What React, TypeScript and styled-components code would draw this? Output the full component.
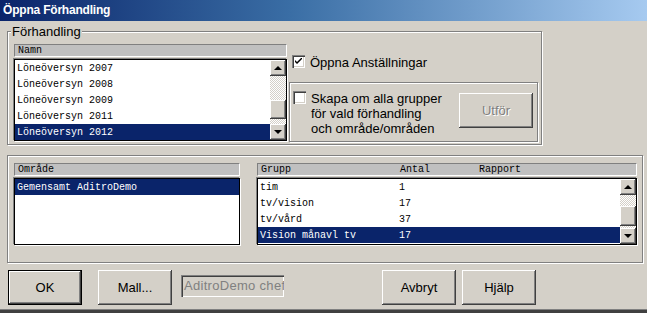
import styled, { createGlobalStyle } from 'styled-components';

const GlobalStyle = createGlobalStyle`
  html, body {
    margin: 0;
    padding: 0;
    background: #d4d0c8;
  }
  body {
    font-family: "Liberation Sans", Arial, sans-serif;
    font-size: 13px;
    color: #000;
  }
  * {
    box-sizing: border-box;
  }
`;

const namn = ['Löneöversyn 2007', 'Löneöversyn 2008', 'Löneöversyn 2009', 'Löneöversyn 2011', 'Löneöversyn 2012'];

const grupper = [
  { name: 'tim', antal: '1' },
  { name: 'tv/vision', antal: '17' },
  { name: 'tv/vård', antal: '37' },
  { name: 'Vision månavl tv', antal: '17' },
];

const CheckMark = () => (
  <svg width="7" height="7" viewBox="0 0 7 7">
    <path d="M0 2 L0 4 L2 6 L7 1 L7 -1 L2 4 Z" fill="#000" />
  </svg>
);

const ScrollBar = ({ before, thumb }: { before: number; thumb: number }) => (
  <Scroll>
    <ArrowButton><ArrowUp /></ArrowButton>
    <Track>
      <Dither style={{ height: before }} />
      <Thumb style={{ height: thumb }} />
      <Dither style={{ flex: 1 }} />
    </Track>
    <ArrowButton><ArrowDown /></ArrowButton>
  </Scroll>
);

const App = () => {
  return (
    <Window>
      <GlobalStyle />
      <TitleBar>Öppna Förhandling</TitleBar>

      <TopGroup>
        <Legend>Förhandling</Legend>
        <TopGrid>
          <ListPanel>
            <Header>Namn</Header>
            <ListBox $height={82}>
              <Rows>
                {namn.map((n, i) => (
                  <Row key={n} $selected={i === namn.length - 1}>{n}</Row>
                ))}
              </Rows>
              <ScrollBar before={24} thumb={19} />
            </ListBox>
          </ListPanel>

          <RightColumn>
            <CheckRow>
              <CheckBox><CheckMark /></CheckBox>
              <CheckLabel>Öppna Anställningar</CheckLabel>
            </CheckRow>
            <InnerBox>
              <CheckRow>
                <CheckBox />
                <CheckLabel>
                  Skapa om alla grupper<br />
                  för vald förhandling<br />
                  och område/områden
                </CheckLabel>
              </CheckRow>
              <Button $disabled $width={74}>Utför</Button>
            </InnerBox>
          </RightColumn>
        </TopGrid>
      </TopGroup>

      <BottomGroup>
        <ListPanel $width={226}>
          <Header>Område</Header>
          <ListBox $height={67}>
            <Rows>
              <Row $selected>Gemensamt AditroDemo</Row>
            </Rows>
          </ListBox>
        </ListPanel>

        <ListPanel $width={380}>
          <Header>
            <Col $width={139}>Grupp</Col>
            <Col $width={79}>Antal</Col>
            <Col>Rapport</Col>
          </Header>
          <ListBox $height={67}>
            <Rows>
              {grupper.map((g, i) => (
                <Row key={g.name} $selected={i === grupper.length - 1}>
                  <Col $width={139}>{g.name}</Col>
                  <Col>{g.antal}</Col>
                </Row>
              ))}
            </Rows>
            <ScrollBar before={11} thumb={20} />
          </ListBox>
        </ListPanel>
      </BottomGroup>

      <ButtonRow>
        <ButtonGroup $gap={16}>
          <Button $default $width={74}>OK</Button>
          <Button $width={74}>Mall...</Button>
        </ButtonGroup>
        <TextBox>AditroDemo chef</TextBox>
        <ButtonGroup $gap={6} $push>
          <Button $width={74}>Avbryt</Button>
          <Button $width={74}>Hjälp</Button>
        </ButtonGroup>
      </ButtonRow>
    </Window>
  );
};

const raised = `
  box-shadow:
    inset -1px -1px 0 #404040,
    inset 1px 1px 0 #fff,
    inset -2px -2px 0 #808080,
    inset 2px 2px 0 #d4d0c8;
`;

const sunken = `
  box-shadow:
    inset 1px 1px 0 #808080,
    inset 2px 2px 0 #404040,
    inset -1px -1px 0 #fff,
    inset -2px -2px 0 #d4d0c8;
`;

const etched = `
  border: 1px solid #808080;
  box-shadow: 1px 1px 0 #fff, inset 1px 1px 0 #fff;
`;

const Window = styled.div`
  width: 647px;
  height: 313px;
  display: flex;
  flex-direction: column;
  background: #d4d0c8;
  box-shadow: inset 0 -3px 0 #404040, inset 0 -4px 0 #808080;
  overflow: hidden;
`;

const TitleBar = styled.div`
  height: 21px;
  padding: 3px 0 0 3px;
  background: linear-gradient(to right, #0a246a 0%, #3a6ea5 45%, #a6caf0 100%);
  color: #fff;
  font-weight: bold;
  font-size: 12px;
  line-height: 15px;
  letter-spacing: -0.2px;
`;

const TopGroup = styled.fieldset`
  ${etched}
  margin: 3px 0 0 7px;
  padding: 5px 3px 2px 6px;
  width: 535px;
  min-width: 0;
`;

const Legend = styled.legend`
  padding: 0 1px;
  margin-left: -3px;
  font-size: 13px;
  line-height: 15px;
  background: #d4d0c8;
`;

const TopGrid = styled.div`
  display: grid;
  grid-template-columns: 273px 249px;
  column-gap: 2px;
`;

const ListPanel = styled.div<{ $width?: number }>`
  display: flex;
  flex-direction: column;
  gap: 2px;
  width: ${(p) => (p.$width ? `${p.$width}px` : 'auto')};
`;

const Header = styled.div`
  height: 13px;
  display: flex;
  align-items: center;
  padding-left: 3px;
  background: #c0c0c0;
  border-top: 1px solid #808080;
  border-left: 1px solid #808080;
  border-bottom: 1px solid #fff;
  border-right: 1px solid #fff;
  font-family: "Liberation Mono", "Courier New", monospace;
  font-size: 10px;
  line-height: 11px;
  white-space: nowrap;
`;

const Col = styled.span<{ $width?: number }>`
  display: inline-block;
  flex: ${(p) => (p.$width ? 'none' : 1)};
  width: ${(p) => (p.$width ? `${p.$width}px` : 'auto')};
`;

const ListBox = styled.div<{ $height: number }>`
  height: ${(p) => p.$height}px;
  display: flex;
  background: #fff;
  border: 1px solid #000;
  box-shadow: -1px -1px 0 #808080, 1px 1px 0 #fff;
  overflow: hidden;
`;

const Rows = styled.div`
  flex: 1;
  display: flex;
  flex-direction: column;
  overflow: hidden;
`;

const Row = styled.div<{ $selected?: boolean }>`
  height: 16px;
  flex: none;
  display: flex;
  align-items: center;
  padding-left: 2px;
  font-family: "Liberation Mono", "Courier New", monospace;
  font-size: 10px;
  white-space: nowrap;
  background: ${(p) => (p.$selected ? '#0a246a' : 'transparent')};
  color: ${(p) => (p.$selected ? '#fff' : '#000')};
`;

const Scroll = styled.div`
  width: 16px;
  display: flex;
  flex-direction: column;
`;

const ArrowButton = styled.div`
  height: 16px;
  flex: none;
  display: flex;
  align-items: center;
  justify-content: center;
  background: #d4d0c8;
  ${raised}
`;

const ArrowUp = styled.span`
  width: 0;
  height: 0;
  border-left: 4px solid transparent;
  border-right: 4px solid transparent;
  border-bottom: 4px solid #000;
`;

const ArrowDown = styled.span`
  width: 0;
  height: 0;
  border-left: 4px solid transparent;
  border-right: 4px solid transparent;
  border-top: 4px solid #000;
`;

const Track = styled.div`
  flex: 1;
  display: flex;
  flex-direction: column;
`;

const Dither = styled.div`
  background: repeating-conic-gradient(#fff 0 25%, #d4d0c8 0 50%) 0 0 / 2px 2px;
`;

const Thumb = styled.div`
  flex: none;
  background: #d4d0c8;
  ${raised}
`;

const RightColumn = styled.div`
  display: flex;
  flex-direction: column;
  padding-top: 11px;
`;

const CheckRow = styled.div`
  display: flex;
  align-items: flex-start;
  gap: 5px;
  padding-left: 3px;
`;

const CheckBox = styled.div`
  width: 13px;
  height: 13px;
  flex: none;
  display: flex;
  align-items: center;
  justify-content: center;
  background: #fff;
  ${sunken}
`;

const CheckLabel = styled.div`
  font-size: 13px;
  line-height: 15px;
  white-space: nowrap;
`;

const InnerBox = styled.div`
  ${etched}
  margin-top: 12px;
  height: 60px;
  display: flex;
  justify-content: space-between;
  align-items: flex-start;
  padding: 8px 4px 0 0;
`;

const Button = styled.div<{ $width: number; $default?: boolean; $disabled?: boolean }>`
  width: ${(p) => p.$width}px;
  height: 35px;
  flex: none;
  display: flex;
  align-items: center;
  justify-content: center;
  margin-top: ${(p) => (p.$disabled ? '2px' : '0')};
  background: #d4d0c8;
  font-size: 13px;
  color: ${(p) => (p.$disabled ? '#808080' : '#000')};
  text-shadow: ${(p) => (p.$disabled ? '1px 1px 0 #fff' : 'none')};
  border: ${(p) => (p.$default ? '1px solid #000' : 'none')};
  ${raised}
`;

const BottomGroup = styled.fieldset`
  ${etched}
  margin: 10px 0 0 7px;
  padding: 7px 5px 17px 6px;
  width: 636px;
  min-width: 0;
  display: flex;
  gap: 17px;
`;

const ButtonRow = styled.div`
  display: flex;
  align-items: flex-start;
  margin-top: 7px;
  padding: 0 111px 0 8px;
`;

const ButtonGroup = styled.div<{ $gap: number; $push?: boolean }>`
  display: flex;
  gap: ${(p) => p.$gap}px;
  margin-left: ${(p) => (p.$push ? 'auto' : '0')};
`;

const TextBox = styled.div`
  width: 103px;
  height: 22px;
  margin: 5px 0 0 9px;
  padding: 3px 0 0 3px;
  background: #d4d0c8;
  color: #808080;
  font-size: 13px;
  line-height: 15px;
  letter-spacing: 0.3px;
  white-space: nowrap;
  overflow: hidden;
  ${sunken}
`;

export default App;
